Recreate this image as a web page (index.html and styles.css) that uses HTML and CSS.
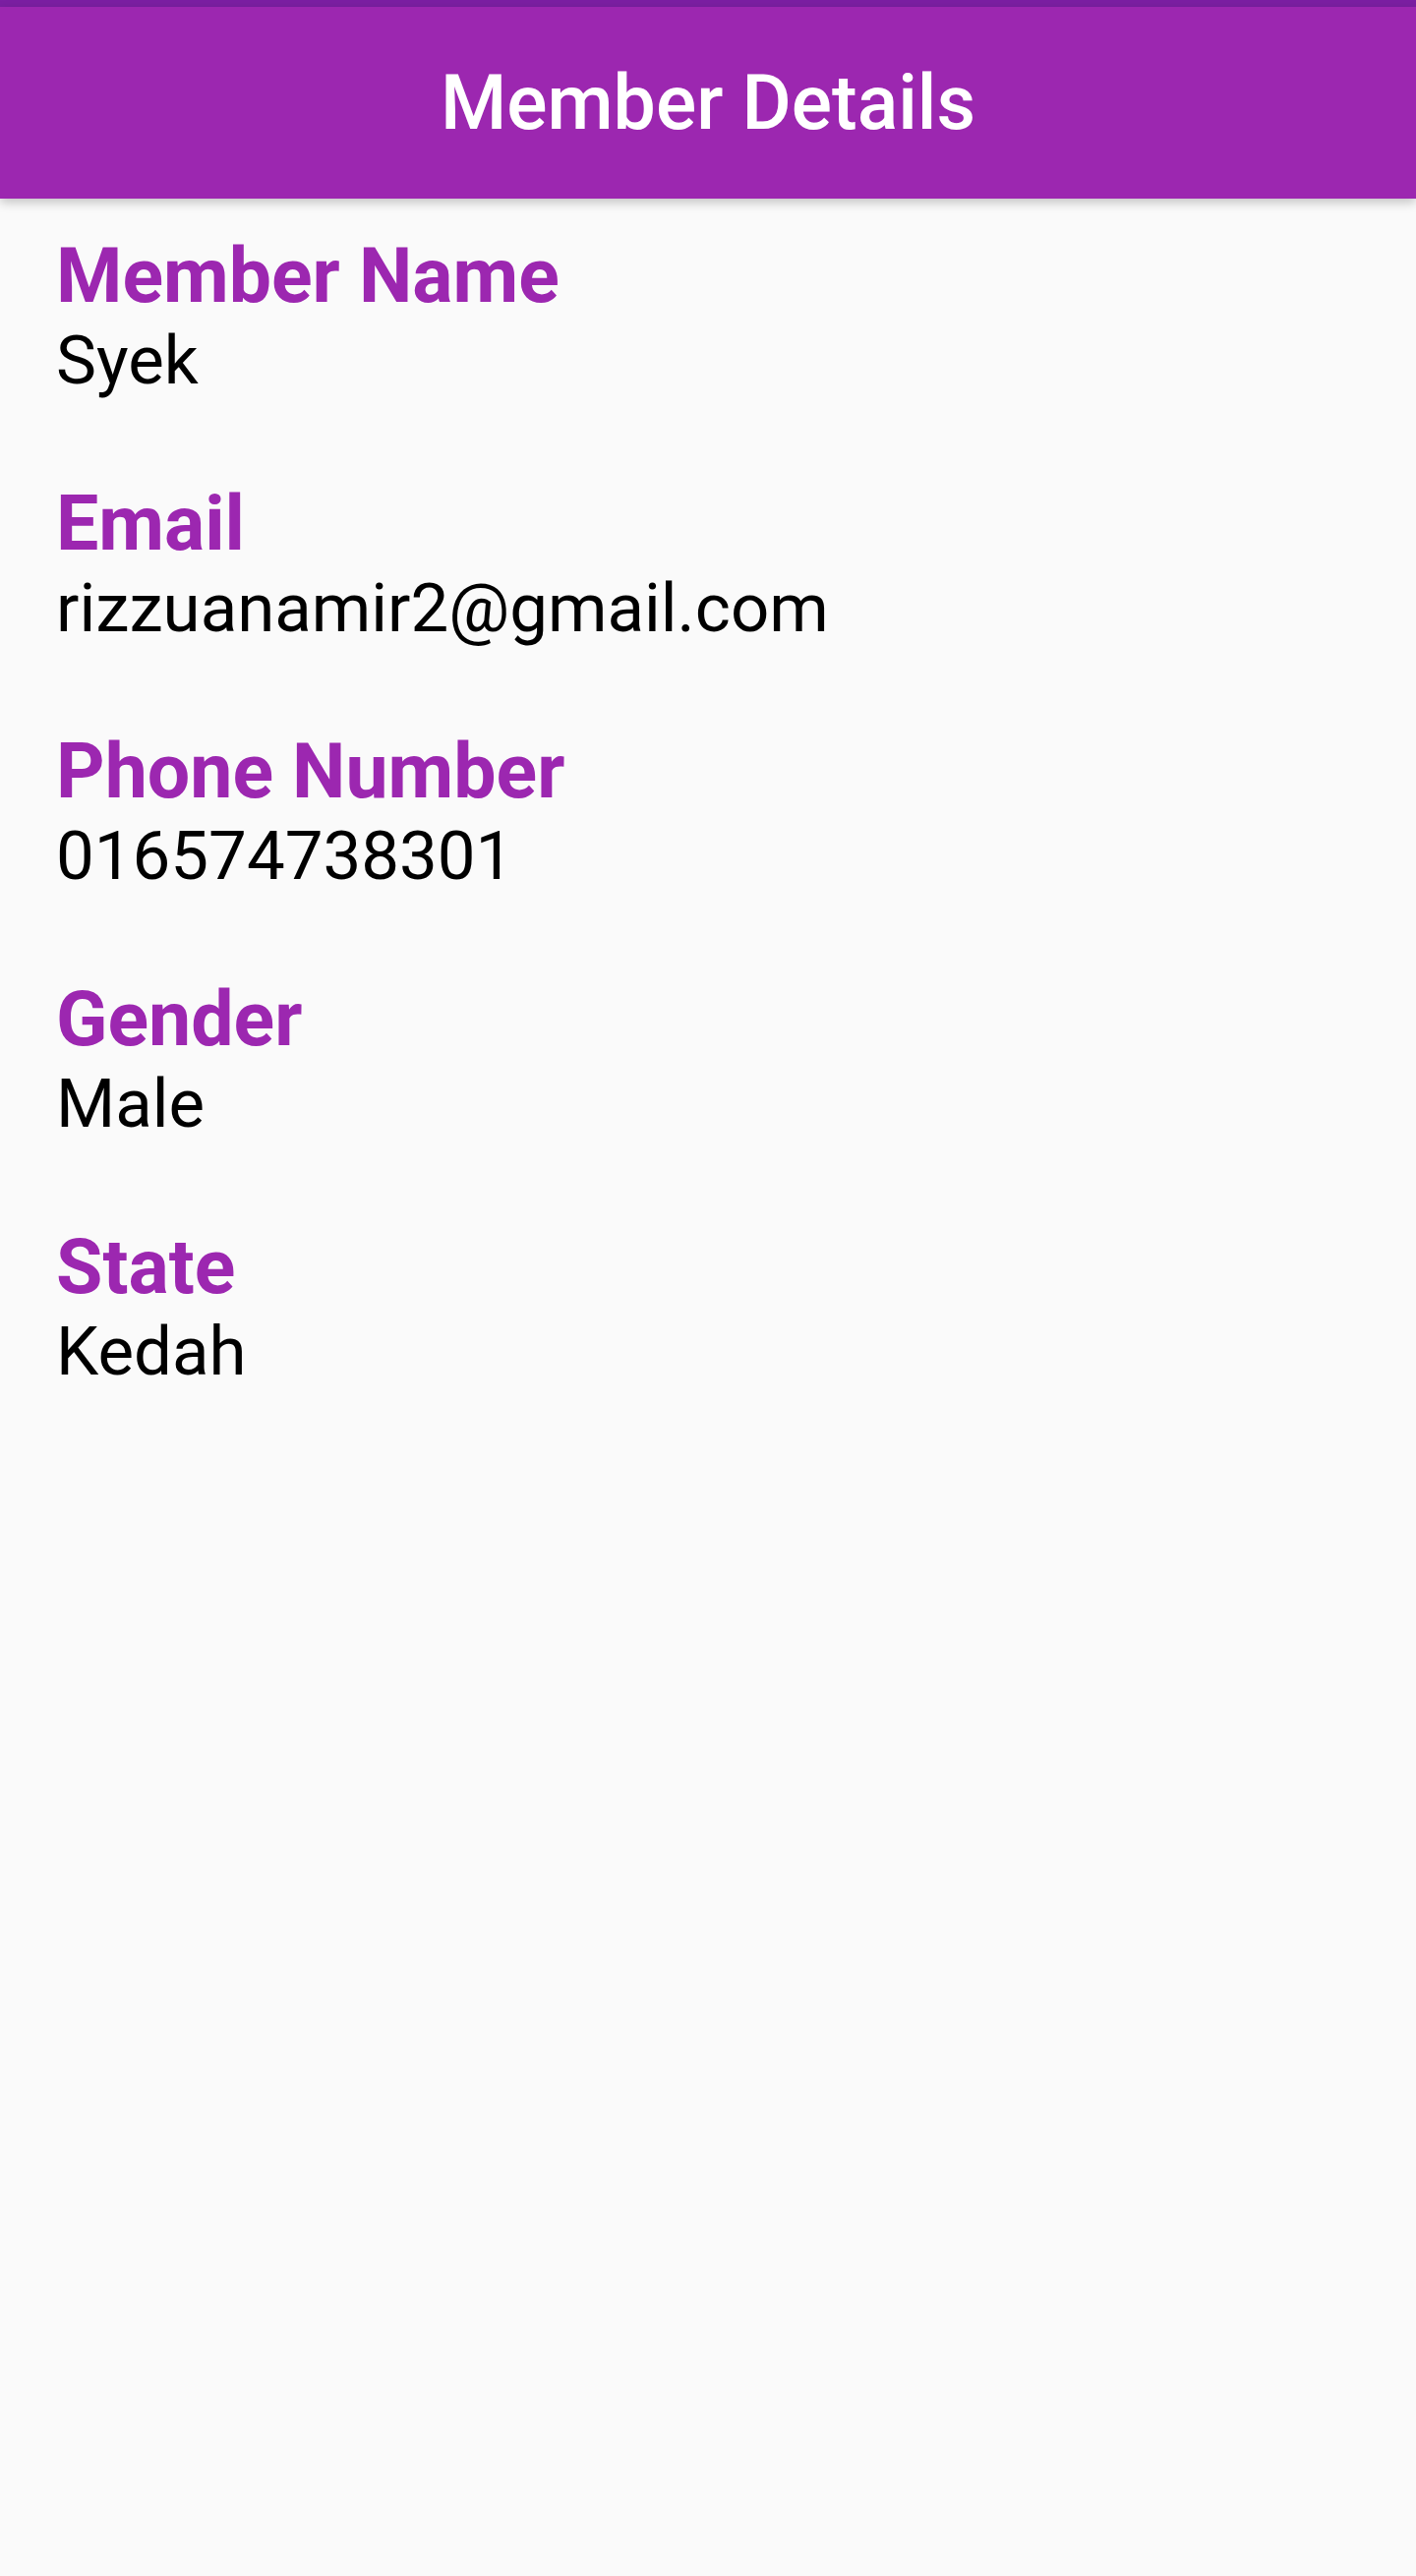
FILE: index.html
```html
<!DOCTYPE html>
<html>
<head>
<meta charset="utf-8">
<link rel="stylesheet" href="styles.css">
</head>
<body>
<div class="statusbar"></div>
<header class="appbar"><h1 class="title">Member Details</h1></header>
<main class="details">
  <section class="field"><div class="label">Member Name</div><div class="value">Syek</div></section>
  <section class="field"><div class="label">Email</div><div class="value">rizzuanamir2@gmail.com</div></section>
  <section class="field"><div class="label">Phone Number</div><div class="value">016574738301</div></section>
  <section class="field"><div class="label">Gender</div><div class="value">Male</div></section>
  <section class="field"><div class="label">State</div><div class="value">Kedah</div></section>
</main>
</body>
</html>
```
FILE: styles.css
```css
html, body {
  margin: 0;
  padding: 0;
  background: #fafafa;
  font-family: Roboto, "Liberation Sans", sans-serif;
}
body {
  min-height: 2620px;
}
.statusbar {
  height: 7px;
  background: #7b1fa2;
}
.appbar {
  position: relative;
  z-index: 1;
  height: 195px;
  background: #9c27b0;
  display: flex;
  align-items: center;
  justify-content: center;
  box-shadow: 0 4px 10px rgba(0, 0, 0, 0.22);
}
.title {
  margin: 0;
  color: #fff;
  font-size: 77px;
  font-weight: 500;
}
.details {
  padding: 37px 57px 0;
  display: flex;
  flex-direction: column;
  gap: 82px;
}
.field {
  display: flex;
  flex-direction: column;
}
.label {
  color: #9c27b0;
  font-size: 77px;
  font-weight: 700;
  line-height: 85px;
}
.value {
  color: #000;
  font-size: 69px;
  line-height: 85px;
}
```
